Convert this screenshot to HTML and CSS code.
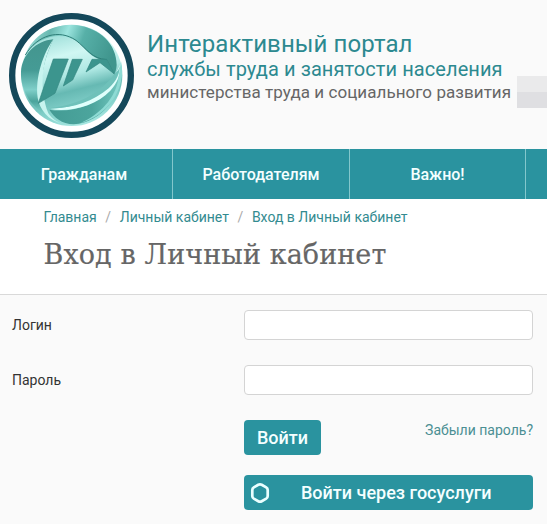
FILE: index.html
```html
<!DOCTYPE html>
<html lang="ru">
<head>
<meta charset="utf-8">
<title>Вход в Личный кабинет</title>
<link rel="stylesheet" href="styles.css">
</head>
<body>
<header class="header">
  <svg class="logo" viewBox="24 36 381 381" aria-hidden="true">
    <defs>
      <linearGradient id="disc" x1="0.35" y1="0" x2="0.6" y2="1">
        <stop offset="0" stop-color="#8bd5cf"/>
        <stop offset="0.3" stop-color="#d0f7f3"/>
        <stop offset="0.5" stop-color="#aee8e3"/>
        <stop offset="0.65" stop-color="#66b9b3"/>
        <stop offset="0.82" stop-color="#83d0ca"/>
        <stop offset="1" stop-color="#a8e8e2"/>
      </linearGradient>
      <linearGradient id="leaf" x1="0" y1="0" x2="0" y2="1">
        <stop offset="0" stop-color="#43958e"/>
        <stop offset="0.4" stop-color="#459b95"/>
        <stop offset="0.65" stop-color="#7fcfc9"/>
        <stop offset="0.8" stop-color="#4ba49c"/>
        <stop offset="1" stop-color="#8fdcd5"/>
      </linearGradient>
      <linearGradient id="crest" x1="0" y1="0.2" x2="1" y2="0.4">
        <stop offset="0" stop-color="#a5e4de"/>
        <stop offset="0.25" stop-color="#68b8b0"/>
        <stop offset="0.43" stop-color="#9ce5df"/>
        <stop offset="0.62" stop-color="#57b0a8"/>
        <stop offset="1" stop-color="#3f958d"/>
      </linearGradient>
      <linearGradient id="base" x1="0" y1="0" x2="1" y2="0">
        <stop offset="0" stop-color="#439b94"/>
        <stop offset="0.6" stop-color="#4ca59d"/>
        <stop offset="1" stop-color="#72c7bf"/>
      </linearGradient>
    </defs>
    <circle cx="214.5" cy="226.5" r="178" fill="#fff" stroke="#14485a" stroke-width="19"/>
    <circle cx="215" cy="226" r="152" fill="url(#disc)"/>
    <path d="M76 165C102 98 167 70 230 76C300 84 350 133 350 195C349 209 346 219 342 222L320 180C286 182 265 158 241 132C205 98 126 92 76 165Z" fill="url(#crest)"/>
    <path d="M76 165C112 105 177 86 228 121C260 146 275 176 320 179" fill="none" stroke="#307f79" stroke-width="3"/>
    <path d="M160 118C108 122 66 164 63 215C60 272 96 326 150 350C111 292 120 200 160 118Z" fill="url(#leaf)"/>
    <path d="M160 118C124 190 117 267 145 340C157 358 172 367 190 372C142 361 119 327 113 293C105 231 130 160 160 118Z" fill="#c7f4ef"/>
    <path d="M148 329C212 340 286 315 324 273L360 216C365 285 307 367 221 373C185 372 162 352 148 329Z" fill="url(#base)"/>
    <path d="M151 327C240 323 323 285 362 190C363 223 352 250 331 272C286 319 210 337 151 327Z" fill="#e0fffc"/>
    <path d="M151 324C230 315 300 282 343 222C357 211 359 203 360 193C360 220 350 244 326 265C278 307 210 327 151 324Z" fill="#6fc1ba"/>
    <path d="M363 184C382 266 320 350 242 369C299 344 348 294 355 235Z" fill="#8edbd4"/>
    <path d="M160 177H205L165 280L115 310ZM217 178H247L218 240L190 258ZM276 178H320L343 222L300 188L258 216Z" fill="#3c958e" stroke="#338680" stroke-width="2"/>
  </svg>
  <div class="brand">
    <div class="brand-title">Интерактивный портал</div>
    <div class="brand-subtitle">службы труда и занятости населения</div>
    <div class="brand-note">министерства труда и социального развития</div>
  </div>
  <span class="redaction"></span>
</header>
<nav class="nav">
  <a class="citizens">Гражданам</a>
  <a>Работодателям</a>
  <a>Важно!</a>
</nav>
<section class="intro">
  <div class="breadcrumbs"><a>Главная</a><i>/</i><a>Личный кабинет</a><i>/</i><a>Вход в Личный кабинет</a></div>
  <h1>Вход в Личный кабинет</h1>
</section>
<form class="form">
  <label for="login">Логин</label>
  <input id="login" type="text">
  <label for="password">Пароль</label>
  <input id="password" type="password">
  <div class="actions">
    <button type="button" class="btn">Войти</button>
    <a class="forgot">Забыли пароль?</a>
  </div>
  <button type="button" class="btn gos">
    <svg class="hex" viewBox="0 0 22 22" aria-hidden="true"><path d="M9.3 2.8Q11 1.9 12.700 2.800L17.200 5.300Q18.700 6.200 18.700 8V14Q18.700 15.800 17.200 16.700L12.700 19.200Q11 20.100 9.300 19.200L4.800 16.700Q3.300 15.800 3.300 14V8Q3.300 6.200 4.800 5.300Z" fill="none" stroke="#eaffff" stroke-width="2.700"/></svg>
    <span>Войти через госуслуги</span>
  </button>
</form>
</body>
</html>
```
FILE: styles.css
```css
* { box-sizing: border-box; }
body { margin: 0; height: 524px; overflow: hidden; background: #fafafa; color: #333; font-family: Roboto, sans-serif; }
.header { display: flex; height: 149px; padding: 12px 0 0 8px; }
.logo { width: 127px; height: 127px; flex: none; }
.brand { width: 369px; flex: none; padding: 18px 0 0 12px; color: #2c8990; white-space: nowrap; }
.brand-title { font-size: 24px; line-height: 28px; letter-spacing: 0.1px; }
.brand-subtitle { font-size: 20px; line-height: 22px; letter-spacing: 0.08px; }
.brand-note { font-size: 17px; line-height: 25px; letter-spacing: 0.06px; color: #666; }
.redaction { width: 30px; height: 32px; flex: none; margin: 64px 0 0 auto; background: linear-gradient(#eaeaeb 50%, #dfdfe2 50%); }
.nav { display: grid; grid-template-columns: 173px 177px 176px 1fr; height: 50px; background: #2a939f; }
.nav a { display: flex; align-items: center; justify-content: center; border-right: 1px solid #83c7cc; color: #f4ffff; font-size: 16px; font-weight: 500; }
.nav .citizens { padding-right: 4px; }
.intro { height: 96px; padding: 9px 0 0 43.5px; background: #fff; border-bottom: 1px solid #d9d9d9; white-space: nowrap; }
.breadcrumbs { display: flex; font-size: 14px; line-height: 18px; color: #338b90; }
.breadcrumbs i { width: 23px; text-align: center; font-style: normal; color: #aaa; }
h1 { margin: 9px 0 0; color: #666; font: 400 27px/40px "Roboto Slab", "DejaVu Serif", serif; letter-spacing: 0.1px; -webkit-text-stroke: 0.2px #666; }
.form { display: grid; grid-template-columns: 232px 289px; grid-template-rows: 30px 30px 35px 35px; row-gap: 25px; padding: 15px 0 0 12px; }
label { font-size: 14px; line-height: 30px; }
input { width: 100%; height: 30px; border: 1px solid #d4d4d4; border-radius: 4px; background: #fff; }
.actions { grid-column: 2; display: flex; justify-content: space-between; align-items: flex-start; }
.btn { height: 35px; padding: 0; border: 0; border-radius: 4px; background: #2a939f; color: #f4ffff; font: 500 18px/35px Roboto, sans-serif; }
.actions .btn { width: 77px; }
.forgot { font-size: 14px; line-height: 20px; color: #4b8f93; }
.gos { grid-column: 2; margin-top: -5px; display: flex; align-items: center; }
.hex { width: 22px; height: 22px; margin: 0 30px 0 5px; }
```
